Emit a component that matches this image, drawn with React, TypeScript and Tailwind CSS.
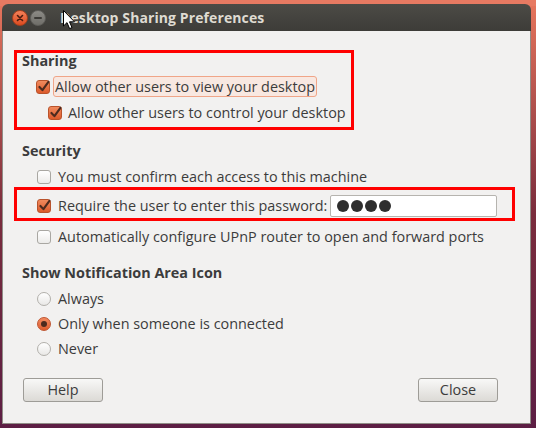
import React from "react";

const FONT = { fontFamily: '"Open Sans", "Noto Sans", sans-serif' };

function CheckBox({ checked }: { checked?: boolean }) {
  if (!checked) {
    return (
      <span className="block h-[14px] w-[14px] shrink-0 rounded-[3px] border border-[#a9a7a2] bg-gradient-to-b from-white to-[#ecebe9]" />
    );
  }
  return (
    <span className="relative block h-[14px] w-[14px] shrink-0 rounded-[3px] border border-[#b9532b] bg-gradient-to-b from-[#f08a5d] to-[#dc5a2a]">
      <svg viewBox="0 0 14 14" className="absolute -left-px -top-[2px] h-[15px] w-[15px]">
        <path d="M3.2 7.4 L6 10.4 L11.6 2.6" fill="none" stroke="#4b2a1e" strokeWidth="2" strokeLinecap="round" strokeLinejoin="round" />
      </svg>
    </span>
  );
}

function Radio({ checked }: { checked?: boolean }) {
  if (!checked) {
    return (
      <span className="block h-[14px] w-[14px] shrink-0 rounded-full border border-[#b2b0ab] bg-gradient-to-b from-white to-[#e9e8e6]" />
    );
  }
  return (
    <span className="flex h-[14px] w-[14px] shrink-0 items-center justify-center rounded-full border border-[#bf5530] bg-gradient-to-b from-[#f28a60] to-[#dd5b2c]">
      <span className="block h-[6px] w-[6px] rounded-full bg-[#4b2a1e]" />
    </span>
  );
}

function Row({
  children,
  className = "",
}: {
  children: React.ReactNode;
  className?: string;
}) {
  return <div className={`flex items-center ${className}`}>{children}</div>;
}

export default function App() {
  return (
    <div
      className="relative h-[428px] w-[536px] overflow-hidden bg-gradient-to-b from-[#e8765c] via-[#7a2c3c] to-[#5c1e44]"
      style={FONT}
    >
      <div className="absolute left-0 right-0 top-0 h-[6px] bg-[#e77a62]" />
      {/* window */}
      <div className="relative ml-[2px] mt-[4px] flex h-[420px] w-[529px] flex-col">
        <div className="flex h-[27px] items-center rounded-t-[6px] bg-gradient-to-b from-[#4c4b46] to-[#3d3c38]">
          <span className="ml-[10px] flex h-[16px] w-[16px] shrink-0 items-center justify-center rounded-full border border-[#a8401d] bg-gradient-to-b from-[#f48058] to-[#dc4a1e]">
            <svg width="8" height="8" viewBox="0 0 8 8">
              <path d="M1.5 1.5 L6.5 6.5 M6.5 1.5 L1.5 6.5" stroke="#4a1c0e" strokeWidth="1.6" strokeLinecap="round" />
            </svg>
          </span>
          <span className="ml-[2px] flex h-[16px] w-[16px] shrink-0 items-center justify-center rounded-full border border-[#5f5e5a] bg-gradient-to-b from-[#8c8b86] to-[#6f6e69]">
            <span className="block h-[2px] w-[8px] rounded bg-[#3c3b37]" />
          </span>
          <span className="ml-[14px] text-[14px] font-bold tracking-[0.1px] text-[#dfdbd2]">
            Desktop Sharing Preferences
          </span>
        </div>

        <div className="flex flex-1 flex-col border-x border-b border-[#8f8c86] bg-[#f2f1f0] pl-[19px] pr-[20px] pt-[20px] text-[14.4px] text-[#3c3c3c]">
          <Row className="h-[20px] font-bold">Sharing</Row>
          <Row className="mt-[5px] h-[21px] pl-[14px]">
            <CheckBox checked />
            <span className="ml-[3px] flex h-[21px] items-center rounded-[3px] border border-[#f0a588] bg-[#f8e8e1] pl-[1px] pr-[1px]">
              Allow other users to view your desktop
            </span>
          </Row>
          <Row className="mt-[5px] h-[21px] pl-[26px]">
            <CheckBox checked />
            <span className="ml-[6px]">Allow other users to control your desktop</span>
          </Row>

          <Row className="mt-[18px] h-[20px] font-bold">Security</Row>
          <Row className="mt-[5px] h-[21px] pl-[15px]">
            <CheckBox />
            <span className="ml-[7px]">You must confirm each access to this machine</span>
          </Row>
          <Row className="mt-[8px] h-[22px] pl-[15px]">
            <CheckBox checked />
            <span className="ml-[7px] w-[272px]">Require the user to enter this password:</span>
            <span className="flex h-[22px] w-[167px] items-center gap-[2px] rounded-[2px] border border-[#b6b4af] bg-white pl-[6px]">
              <span className="block h-[12px] w-[12px] rounded-full bg-[#2e2e2e]" />
              <span className="block h-[12px] w-[12px] rounded-full bg-[#2e2e2e]" />
              <span className="block h-[12px] w-[12px] rounded-full bg-[#2e2e2e]" />
              <span className="block h-[12px] w-[12px] rounded-full bg-[#2e2e2e]" />
            </span>
          </Row>
          <Row className="mt-[9px] h-[21px] pl-[15px]">
            <CheckBox />
            <span className="ml-[7px]">Automatically configure UPnP router to open and forward ports</span>
          </Row>

          <Row className="mt-[16px] h-[20px] font-bold">Show Notification Area Icon</Row>
          <Row className="mt-[6px] h-[20px] pl-[15px]">
            <Radio />
            <span className="ml-[7px]">Always</span>
          </Row>
          <Row className="mt-[5px] h-[20px] pl-[15px]">
            <Radio checked />
            <span className="ml-[7px]">Only when someone is connected</span>
          </Row>
          <Row className="mt-[5px] h-[20px] pl-[15px]">
            <Radio />
            <span className="ml-[7px]">Never</span>
          </Row>

          <div className="mt-[19px] flex items-center justify-between pl-[1px] pr-[12px]">
            <button className="h-[24px] w-[80px] rounded-[3px] border border-[#9e9c97] bg-gradient-to-b from-[#f8f8f7] to-[#dcdad6] text-[14.4px] text-[#3c3c3c]">
              Help
            </button>
            <button className="h-[24px] w-[80px] rounded-[3px] border border-[#9e9c97] bg-gradient-to-b from-[#f8f8f7] to-[#dcdad6] text-[14.4px] text-[#3c3c3c]">
              Close
            </button>
          </div>
        </div>
      </div>

      {/* red annotation boxes */}
      <div className="pointer-events-none absolute left-[14px] top-[50px] h-[80px] w-[340px] border-[3px] border-[#ff0000]" />
      <div className="pointer-events-none absolute left-[14px] top-[187px] h-[34px] w-[501px] border-[3px] border-[#ff0000]" />

      {/* mouse cursor */}
      <svg className="absolute left-[63px] top-[10px]" width="13" height="20" viewBox="0 0 13 20">
        <path d="M0.5 0.5 L0.5 16 L4 12.6 L6.6 18.6 L9 17.6 L6.5 11.8 L11.5 11.8 Z" fill="#fff" stroke="#000" strokeWidth="1" strokeLinejoin="round" />
      </svg>
    </div>
  );
}
